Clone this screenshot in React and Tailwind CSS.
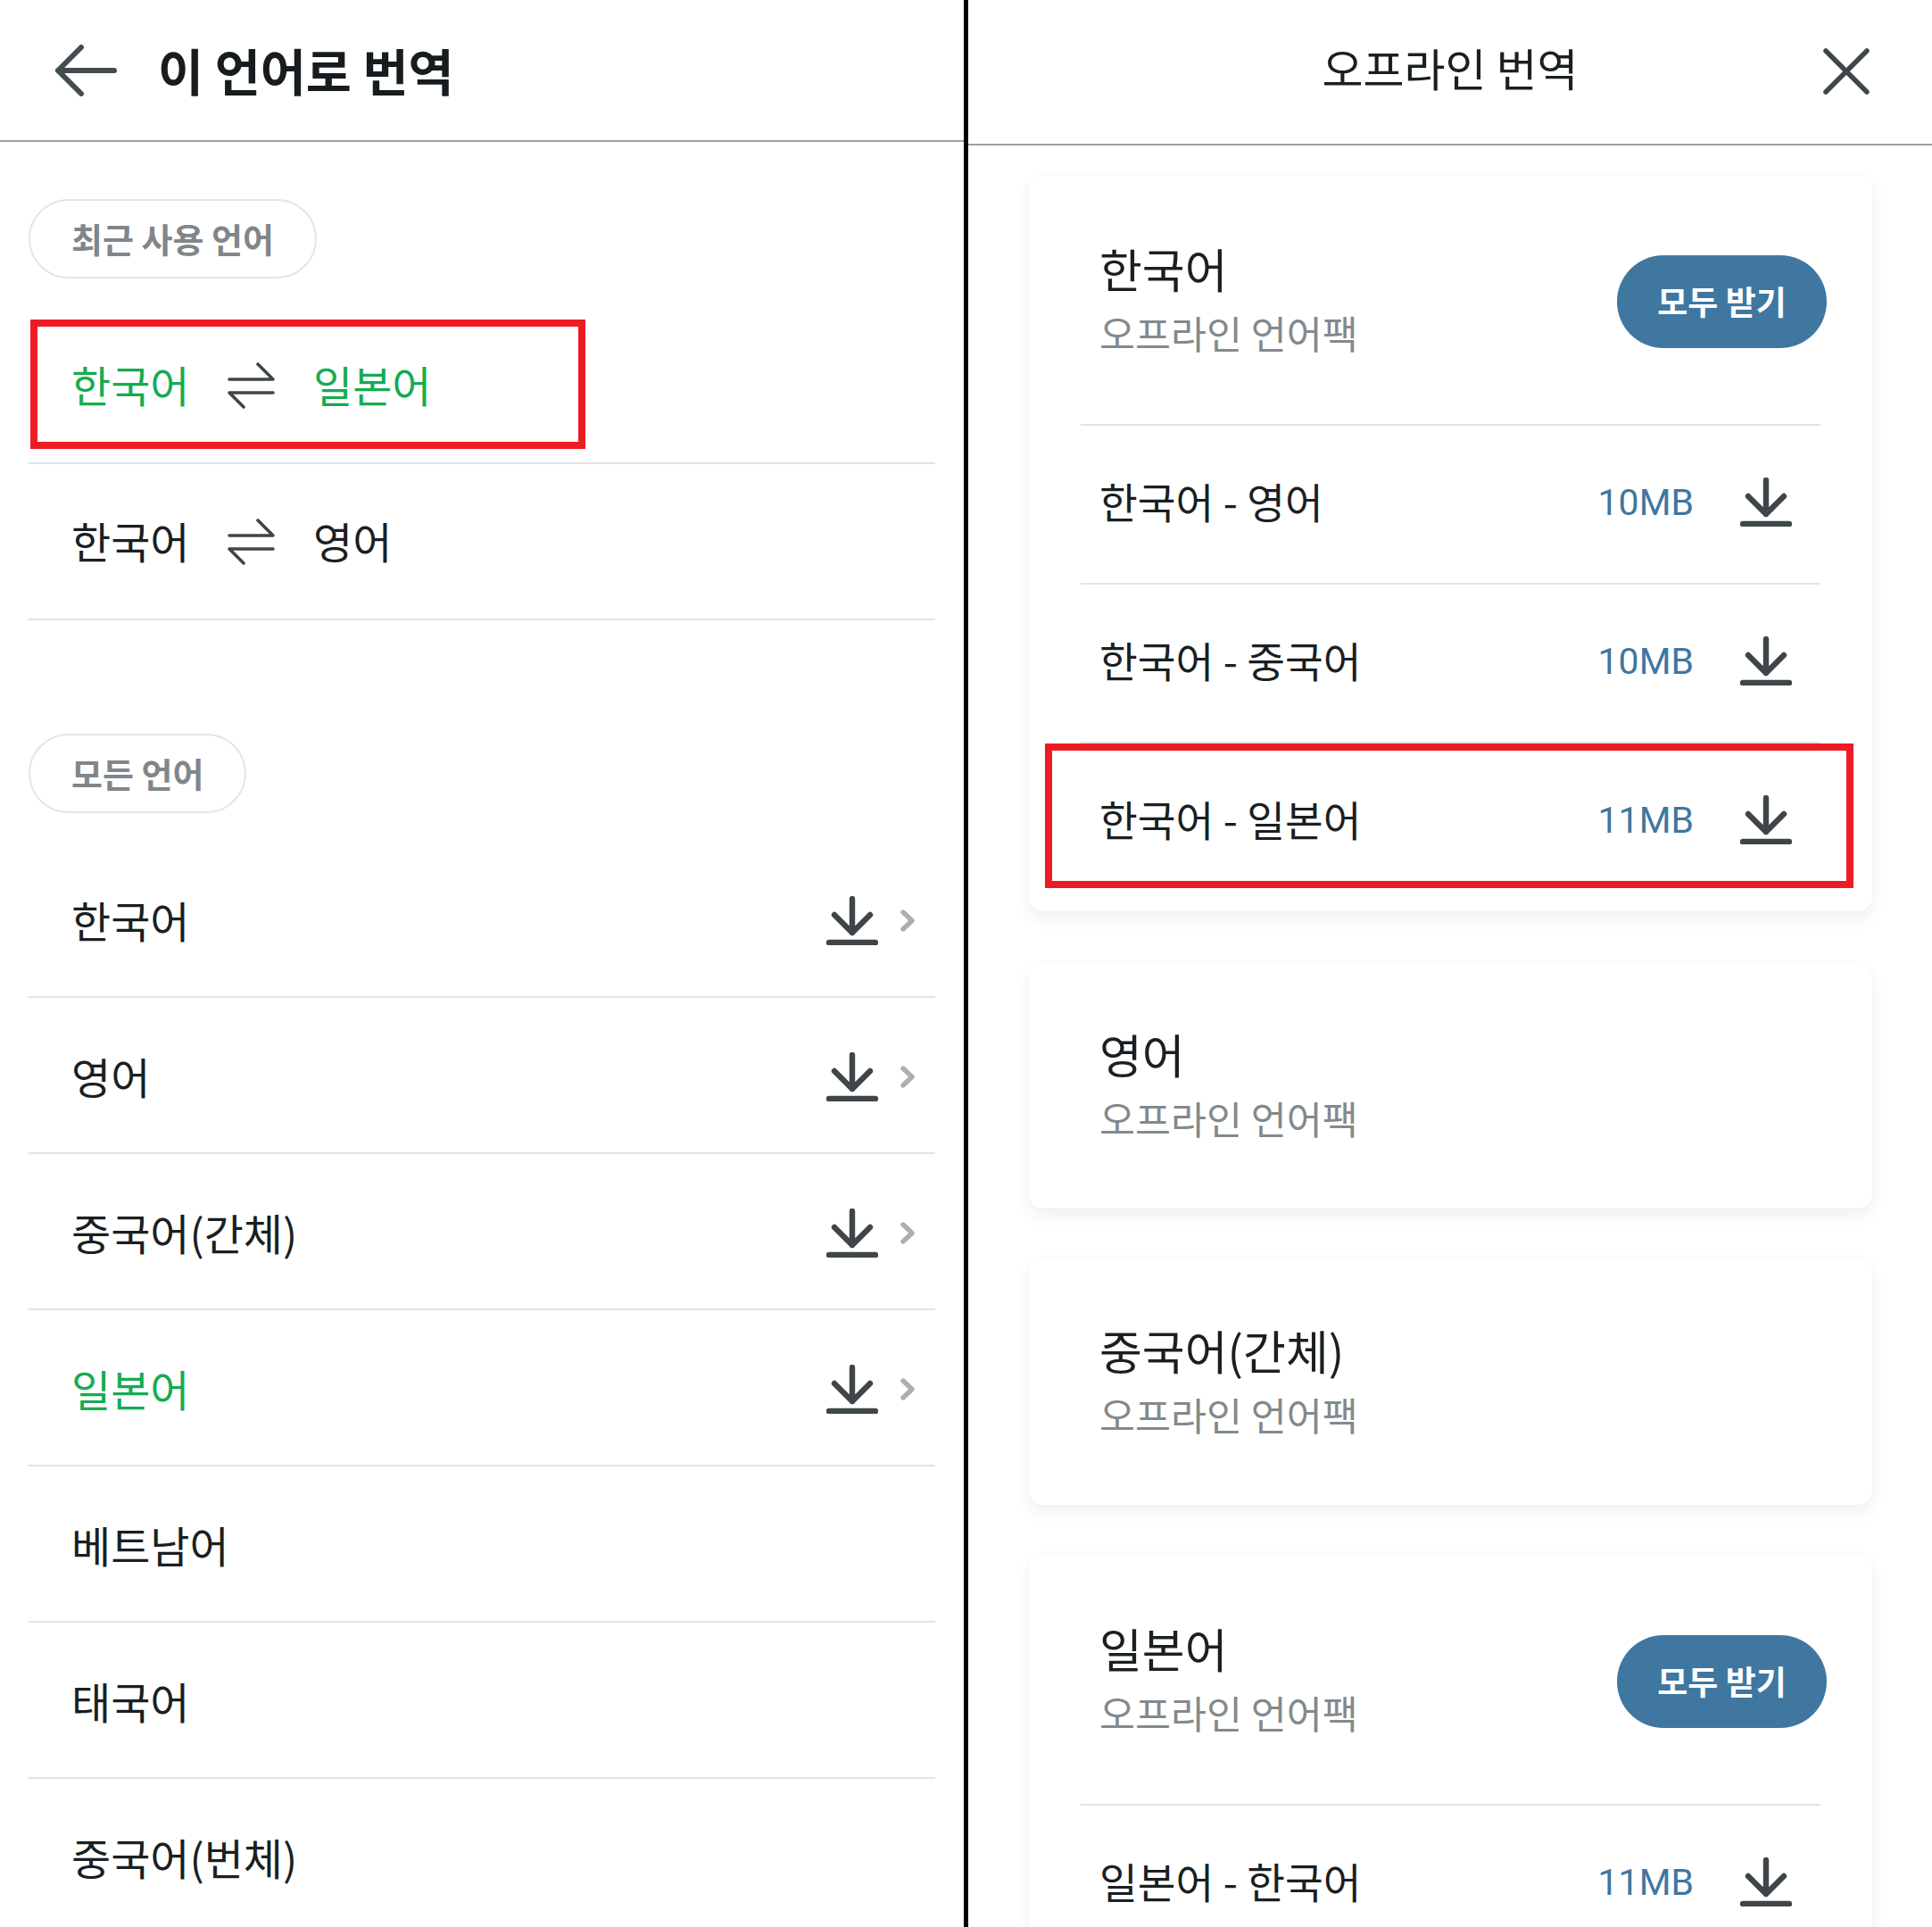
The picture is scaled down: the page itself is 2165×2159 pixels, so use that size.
// Offline translation screens, side by side
const SANS = "font-['Noto_Sans_CJK_KR','Noto_Sans',sans-serif]"

function BackIcon() {
  return (
    <svg width="70" height="58" viewBox="0 0 70 58" fill="none" stroke="#454c50" strokeWidth="6" strokeLinecap="round" strokeLinejoin="round">
      <path d="M67 29H4M30 3L4 29l26 26" />
    </svg>
  )
}

function CloseIcon() {
  return (
    <svg width="52" height="52" viewBox="0 0 52 52" fill="none" stroke="#3f4649" strokeWidth="5.5" strokeLinecap="round">
      <path d="M3 3l46 46M49 3L3 49" />
    </svg>
  )
}

function SwapIcon() {
  return (
    <svg width="53" height="52" viewBox="0 0 53 52" fill="none" stroke="#3f4649" strokeWidth="3.6" strokeLinecap="round" strokeLinejoin="round">
      <path d="M2 19h49L34 2M51 34H2l16 16" />
    </svg>
  )
}

function DownloadIcon() {
  return (
    <svg width="58" height="55" viewBox="0 0 58 55" fill="none" stroke="#3f4649" strokeWidth="6.4" strokeLinecap="round" strokeLinejoin="round">
      <path d="M29 3v38M9 21l20 20 20-20M3 52h52" />
    </svg>
  )
}

function Chevron() {
  return (
    <svg width="17" height="25" viewBox="0 0 17 25" fill="none" stroke="#a9afb2" strokeWidth="5.4" strokeLinecap="round" strokeLinejoin="round">
      <path d="M3 3l10 9.5L3 22" />
    </svg>
  )
}

function Pill({ children }) {
  return (
    <div className="inline-flex h-[89px] items-center rounded-full border-2 border-[#dfe7ea] px-[46px] pb-[2px] text-[38px] font-bold text-[#80868a]">
      {children}
    </div>
  )
}

function PairRow({ from, to, active }) {
  return (
    <div className={`relative flex h-[175px] items-center border-b-2 border-[#dce5e8] pl-[48px] text-[48px] ${active ? 'text-[#16ab50]' : 'text-[#1a1f22]'}`}>
      <span className="mb-[4px] w-[175px]">{from}</span>
      <SwapIcon />
      <span className="mb-[4px] ml-[43px]">{to}</span>
      {active && <div className="absolute left-[2px] top-[13px] h-[145px] w-[622px] border-[8px] border-[#ed1c24]" />}
    </div>
  )
}

function LangRow({ name, active, download }) {
  return (
    <div className={`flex h-[175px] items-center border-b-2 border-[#dce5e8] pl-[48px] text-[48px] ${active ? 'text-[#16ab50]' : 'text-[#1a1f22]'}`}>
      <span className="flex-1">{name}</span>
      {download && (
        <div className="mt-[3px] flex items-center">
          <DownloadIcon />
          <span className="ml-[25px] mr-[22px]">
            <Chevron />
          </span>
        </div>
      )}
    </div>
  )
}

function CardHead({ title, button }) {
  return (
    <div className="flex items-center justify-between pl-[79px] pr-[51px]">
      <div>
        <div className="text-[52px] leading-[72px] text-[#1a1f22]">{title}</div>
        <div className="text-[43.5px] leading-[72px] text-[#83898c]">오프라인 언어팩</div>
      </div>
      {button && (
        <button className="mt-[2px] flex h-[104px] w-[235px] items-center justify-center rounded-full bg-[#3f77a0] text-[37px] font-bold text-white">
          모두 받기
        </button>
      )}
    </div>
  )
}

function PackRow({ name, size, children }) {
  return (
    <div className="relative mx-[58px] flex h-[178px] items-center justify-between border-t-2 border-[#dce5e8] pb-[8px] pl-[21px] pr-[32px]">
      <span className="text-[46.5px] text-[#1a1f22]">{name}</span>
      <div className="mt-[2px] flex items-center gap-[52px]">
        <span className="mt-[3px] font-['Roboto',sans-serif] text-[41px] text-[#3f77a0]">{size}</span>
        <DownloadIcon />
      </div>
      {children}
    </div>
  )
}

function Card({ children, className }) {
  return (
    <div className={`w-[945px] rounded-[16px] bg-white shadow-[0_8px_18px_rgba(60,70,80,0.08),0_0_6px_rgba(60,70,80,0.02)] ${className}`}>
      {children}
    </div>
  )
}

export default function App() {
  return (
    <div className={`flex h-[2159px] w-[2165px] overflow-hidden bg-white ${SANS}`}>
      {/* 왼쪽: 언어 선택 */}
      <div className="w-[1080px] shrink-0">
        <header className="flex h-[159px] items-center border-b-2 border-[#9aa2a6] pl-[61px]">
          <BackIcon />
          <h1 className="ml-[46px] text-[55.5px] font-bold text-[#171c1f]">이 언어로 번역</h1>
        </header>
        <div className="pl-[32px] pr-[32px]">
          <div className="mt-[64px] mb-[33px]">
            <Pill>최근 사용 언어</Pill>
          </div>
          <PairRow from="한국어" to="일본어" active />
          <PairRow from="한국어" to="영어" />
          <div className="mt-[127px] mb-[32px]">
            <Pill>모든 언어</Pill>
          </div>
          <LangRow name="한국어" download />
          <LangRow name="영어" download />
          <LangRow name="중국어(간체)" download />
          <LangRow name="일본어" active download />
          <LangRow name="베트남어" />
          <LangRow name="태국어" />
          <LangRow name="중국어(번체)" />
        </div>
      </div>

      <div className="w-[5px] shrink-0 bg-black" />

      {/* 오른쪽: 오프라인 번역 */}
      <div className="w-[1080px] shrink-0">
        <header className="relative flex h-[163px] items-center justify-center border-b-2 border-[#9aa2a6] pb-[10px] shadow-[0_2px_4px_rgba(0,0,0,0.04)]">
          <h1 className="text-[50px] font-normal text-[#1a1f22]">오프라인 번역</h1>
          <span className="absolute right-[70px] top-[54px]">
            <CloseIcon />
          </span>
        </header>
        <div className="flex flex-col items-start pl-[68px]">
          <Card className="mt-[33px] pt-[69px] pb-[12px]">
            <div className="pb-[66px]">
              <CardHead title="한국어" button />
            </div>
            <PackRow name="한국어 - 영어" size="10MB" />
            <PackRow name="한국어 - 중국어" size="10MB" />
            <PackRow name="한국어 - 일본어" size="11MB">
              <div className="absolute left-[-40px] top-[0px] h-[162px] w-[906px] border-[8px] border-[#ed1c24]" />
            </PackRow>
          </Card>
          <Card className="mt-[59px] flex h-[274px] flex-col justify-center">
            <CardHead title="영어" />
          </Card>
          <Card className="mt-[56px] flex h-[276px] flex-col justify-center pt-[2px]">
            <CardHead title="중국어(간체)" />
          </Card>
          <Card className="mt-[56px] pt-[69px]">
            <div className="pb-[66px]">
              <CardHead title="일본어" button />
            </div>
            <PackRow name="일본어 - 한국어" size="11MB" />
          </Card>
        </div>
      </div>
    </div>
  )
}
